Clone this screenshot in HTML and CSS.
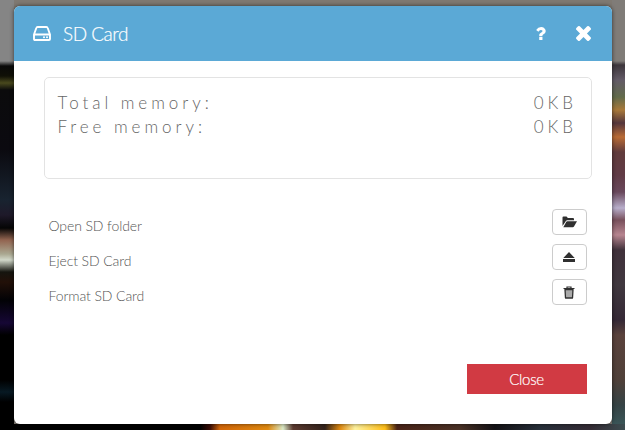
FILE: index.html
```html
<!DOCTYPE html>
<html lang="en">
<head>
<meta charset="utf-8">
<title>SD Card</title>
<link rel="stylesheet" href="styles.css">
</head>
<body>
<div class="backdrop"></div>
<main class="dialog">
  <header class="header">
    <svg class="drive" viewBox="0 0 18 15"><path d="M1 8.500 3.300 2Q3.600 1 4.600 1h8.800q1 0 1.300 1L17 8.500V13q0 1-1 1H2q-1 0-1-1zM1 8.500h16" fill="none" stroke="#fff" stroke-width="1.900" stroke-linejoin="round"/><circle cx="11" cy="11.300" r="1" fill="#fff"/><circle cx="14" cy="11.300" r="1" fill="#fff"/></svg>
    <h1 class="title">SD Card</h1>
    <svg class="help" viewBox="480 256 925 1280"><path fill="#fff" d="M1088 1256v240q0 16-12 28t-28 12h-240q-16 0-28-12t-12-28v-240q0-16 12-28t28-12h240q16 0 28 12t12 28zm316-600q0 54-15.500 101t-35 76.500-55 59.500-57.500 43.500-61 35.500q-41 23-68.500 65t-27.500 67q0 17-12 32.500t-28 15.500h-240q-15 0-25.500-18.500t-10.500-37.500v-45q0-83 65-156.500t143-108.500q59-27 84-56t25-76q0-42-46.500-74t-107.500-32q-65 0-108 29-35 25-107 115-13 16-31 16-12 0-25-8l-164-125q-13-10-15.500-25t5.500-28q160-266 464-266 80 0 161 31t146 83 106 127.500 41 158.500z"/></svg>
    <svg class="dismiss" viewBox="302 366 1188 1188"><path fill="#fff" d="M1490 1322q0 40-28 68l-136 136q-28 28-68 28t-68-28l-294-294-294 294q-28 28-68 28t-68-28l-136-136q-28-28-28-68t28-68l294-294-294-294q-28-28-28-68t28-68l136-136q28-28 68-28t68 28l294 294 294-294q28-28 68-28t68 28l136 136q28 28 28 68t-28 68l-294 294 294 294q28 28 28 68z"/></svg>
  </header>
  <section class="memory">
    <div class="stat"><span>Total memory:</span><span>0KB</span></div>
    <div class="stat"><span>Free memory:</span><span>0KB</span></div>
  </section>
  <section class="actions">
    <div class="action"><span>Open SD folder</span><button class="tool" aria-label="Open"><svg width="15" height="12" viewBox="0 0 15 12"><path fill="#303030" d="M.5 10V1.500Q.5.500 1.500.500H4.200Q5 .500 5.300 1.200L5.700 2H11q1 0 1 1v1.200H5.200q-.8 0-1.300.8zM1.300 11.300 4.300 5.800Q4.700 5.200 5.400 5.200H15L12 10.600q-.4.700-1.200.7z"/></svg></button></div>
    <div class="action"><span>Eject SD Card</span><button class="tool" aria-label="Eject"><svg width="12" height="11" viewBox="0 0 12 11"><path fill="#303030" d="M6 0 11.700 6H.3zM0 7h12v3H0z"/></svg></button></div>
    <div class="action"><span>Format SD Card</span><button class="tool" aria-label="Format"><svg width="12" height="13" viewBox="0 0 12 13"><path d="M2 3.500h8L9.500 12h-7z" fill="#aaa" stroke="#303030" stroke-width="1.300" stroke-linejoin="round"/><path d="M.500 2.500h11M4 2.200V1h4v1.200" fill="none" stroke="#303030" stroke-width="1.200"/></svg></button></div>
  </section>
  <footer class="footer"><button class="close">Close</button></footer>
</main>
</body>
</html>
```
FILE: styles.css
```css
* { box-sizing: border-box; }
body {
  margin: 0;
  height: 430px;
  overflow: hidden;
  padding: 6px 13px 6px 14px;
  font-family: Lato, sans-serif;
  font-weight: 300;
}
.backdrop {
  position: absolute;
  inset: 0;
  z-index: -1;
  background:
    linear-gradient(90deg, #000 0 200px, #3a0c05 210px, #d36608 220px, #e08a10 268px, #dcebc8 283px, #5c3a30 293px, #33231c 325px, #e08a10 340px, #fff3a0 355px, #ffbf18 385px, #4b2418 397px, #4a3226 460px, #141216 495px, #28303a 540px, #352c35 590px, #3c4c50 625px) 0 424px / 625px 6px no-repeat,
    linear-gradient(#807c78 0 61px, #3d363c 65px, #635b67 80px, #626b4b 97px, #a9793a 110px, #54363c 123px, #b96b35 137px, #613b3c 152px, #613b46 175px, #69485c 192px, #b8aecb 208px, #78505c 220px, #b78590 235px, #40313b 250px, #40383f 285px, #352936 320px, #5a423c 335px, #4f4039 380px, #354345 405px, #3b5a5d 430px) 612px 0 / 13px 430px no-repeat,
    linear-gradient(#858585 0 61px, #090909 66px, #101006 76px, #49491d 83px, #0b0b0c 90px, #0b0a10 150px, #182330 200px, #1e1929 215px, #050505 228px, #926450 240px, #aaa891 254px, #d1d8c9 260px, #15150f 272px, #221008 282px, #020205 300px, #160735 323px, #000 335px, #000 380px, #071923 392px, #000 402px) 0 0 / 14px 430px no-repeat,
    #7f7972;
}
.dialog {
  height: 418px;
  background: #fff;
  border-radius: 6px;
  overflow: hidden;
  box-shadow: 0 0 4px rgba(0, 0, 0, .6);
}
.header {
  height: 55px;
  display: flex;
  align-items: center;
  padding: 0 21px 0 19px;
  background: #5ba9d6;
  color: #fff;
}
.drive { width: 18px; height: 15px; }
.title { flex: 1; margin: 0 0 0 12px; font-size: 19px; font-weight: 300; line-height: 24px; letter-spacing: -.5px; -webkit-text-stroke: .2px #fff; }
.help { width: 10px; height: 13px; margin: 0 30px 1px 0; }
.dismiss { width: 15px; height: 15px; }
.memory {
  height: 102px;
  margin: 16px 20px 0 30px;
  padding: 13px 13px 0 12.500px;
  border: 1px solid #e3e3e3;
  border-radius: 5px;
}
.stat {
  display: flex;
  justify-content: space-between;
  font-size: 17px;
  font-weight: 300;
  line-height: 24px;
  letter-spacing: 3.950px;
  color: #666;
}
.stat span:last-child { margin-right: 1px; }
.actions { margin: 30px 25px 0 34.500px; }
.action {
  display: flex;
  justify-content: space-between;
  height: 35px;
  font-size: 14px;
  line-height: 34px;
  letter-spacing: -.1px;
  color: #555;
}
.tool {
  display: flex;
  align-items: center;
  justify-content: center;
  width: 35px;
  height: 26px;
  padding: 0 1px 0 0;
  border: 1px solid #ccc;
  border-radius: 4px;
  background: #fff;
}
.footer { display: flex; justify-content: flex-end; margin: 50px 25px 0 0; }
.close {
  width: 120px;
  height: 30px;
  padding: 0 1px 1px 0;
  border: 0;
  background: #d13a43;
  color: #fff;
  font: 300 15px Lato, sans-serif;
  letter-spacing: -.3px;
  -webkit-text-stroke: .2px #fff;
}
```
